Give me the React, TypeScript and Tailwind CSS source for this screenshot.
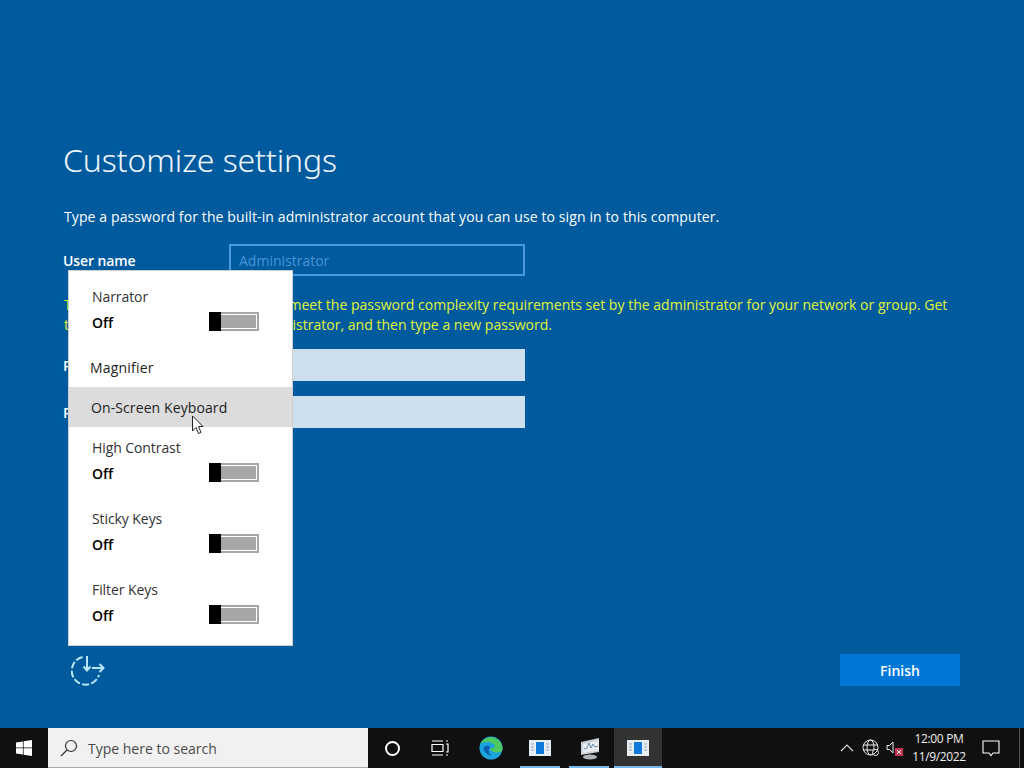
import React from "react";

function Toggle() {
  return (
    <div className="mb-[2px] flex h-[19px] w-[50px] border-2 border-[#a6a6a6] bg-[#a6a6a6]">
      <div className="-my-[2px] -ml-[2px] h-[19px] w-[12px] shrink-0 bg-black" />
      <div className="flex-1 border-[1px] border-white border-l-0 bg-[#a6a6a6]" />
    </div>
  );
}

function ToggleItem({ label }: { label: string }) {
  return (
    <div className="h-[71px] pl-[23px] pr-[33px]">
      <div className="h-[20px] text-[14px] leading-[20px] tracking-[-0.08px] text-[#333]">{label}</div>
      <div className="mt-[5px] flex h-[20px] items-center justify-between">
        <span className="text-[14px] font-semibold text-black">Off</span>
        <Toggle />
      </div>
    </div>
  );
}

function Win() {
  return (
    <svg width="16" height="16" viewBox="0 0 16 16" fill="#fff">
      <path d="M0 2.400 6.900 1.400V7.500H0ZM7.600 1.300 16 0V7.500H7.600ZM0 8.300H6.900V14.500L0 13.500ZM7.600 8.300H16V16L7.600 14.700Z" />
    </svg>
  );
}

function Doc() {
  return (
    <svg width="22" height="16" viewBox="0 0 22 16">
      <rect width="22" height="16" fill="#e8edf2" />
      <rect x="7" y="2" width="8" height="12" fill="#0f78dc" />
      <path d="M2 4h3M2 7h3M2 10h3M17 4h3M17 7h3M17 10h3" stroke="#8fa3b5" strokeWidth="1" />
    </svg>
  );
}

export default function App() {
  return (
    <div className="relative flex h-[768px] w-[1024px] flex-col overflow-hidden bg-[#005a9e] font-['Open_Sans','Noto_Sans',sans-serif] text-white">
      <main className="flex flex-1 flex-col pl-[64px] pt-[138px]">
        <h1 className="-ml-[1px] font-['Noto_Sans',sans-serif] text-[32px] font-light leading-[44px] tracking-[-0.1px] text-[#f0f6fb]">Customize settings</h1>
        <p className="mt-[25px] h-[20px] whitespace-nowrap text-[14px] leading-[20px] tracking-[0.11px]">
          Type a password for the built-in administrator account that you can use to sign in to this computer.
        </p>
        <div className="mt-[17px] flex h-[32px] items-center">
          <span className="-ml-[1px] w-[166px] text-[14px] font-semibold tracking-[-0.1px]">User name</span>
          <div className="flex h-[32px] w-[296px] items-center border-2 border-[#4a98e0] pl-[8px] text-[14px] text-[#4a94d8]">Administrator</div>
        </div>
        <div className="mt-[19px] whitespace-nowrap text-[14px] leading-[20px] tracking-[0.02px] text-[#e2f53a]">
          <div>The password you typed does not meet the password complexity requirements set by the administrator for your network or group. Get</div>
          <div>the requirements from your administrator, and then type a new password.</div>
        </div>
        <div className="mt-[14px] flex h-[32px] items-center">
          <span className="-ml-[1px] w-[166px] text-[14px] font-semibold">Password</span>
          <div className="h-[32px] w-[296px] bg-[#cddfee]" />
        </div>
        <div className="mt-[15px] flex h-[32px] items-center">
          <span className="-ml-[1px] w-[166px] text-[14px] font-semibold">Reenter password</span>
          <div className="h-[32px] w-[296px] bg-[#cddfee]" />
        </div>
        <div className="mt-[226px] flex h-[32px] items-center justify-between pr-[64px]">
          <svg width="36" height="32" viewBox="0 0 36 32" fill="none" stroke="#b8e6f2" strokeWidth="2" className="ml-[7px]">
            <path d="M11.500 3A14 14 0 1 0 28 21" strokeDasharray="7 2.200" />
            <path d="M16 2v14M12.500 12.500l3.500 4 3.500-4M21 14h11.500M28.500 10l4 4-4 4" />
          </svg>
          <button className="h-[32px] w-[120px] bg-[#0078d7] text-[14px] font-semibold text-white">Finish</button>
        </div>
      </main>

      <footer className="flex h-[40px] shrink-0 items-center bg-[#101010]">
        <div className="flex h-[40px] w-[48px] items-center justify-center"><Win /></div>
        <div className="flex h-[40px] w-[320px] items-center border-b border-[#aaa] bg-[#f1f1f1] pl-[12px] pt-[1px] text-[14px] text-[#4a4a4a]">
          <svg width="18" height="18" viewBox="0 0 18 18" fill="none" stroke="#333" strokeWidth="1.200"><circle cx="11" cy="7" r="5.500" /><path d="M7 11l-6 6" /></svg>
          <span className="ml-[10px]">Type here to search</span>
        </div>
        <div className="flex w-[48px] justify-center"><div className="h-[15px] w-[15px] rounded-full border-2 border-white" /></div>
        <div className="flex w-[48px] justify-center">
          <svg width="18" height="16" viewBox="0 0 18 16" fill="none" stroke="#fff" strokeWidth="1.200"><path d="M1 1h11M1 15h11M1 4.500h11v7H1zM15 1h2M15 4h2v8h-2M15 15h2" /></svg>
        </div>
        <div className="flex w-[52px] justify-center pl-[2px]">
          <svg width="24" height="24" viewBox="0 0 26 26">
            <circle cx="13" cy="13" r="12.500" fill="#1aa3dc" />
            <path d="M25.500 14a12.500 12.500 0 0 0-24-5c4-4 12-4 15.500 1 1 3-3 4-5 3 0 3 4 5 8 5 3 0 5.500-2 5.500-4z" fill="#4dc95e" />
            <path d="M12 13c-2 1-3 5 2 8-5 0-9-4-9-8 1-3 6-4 7 0z" fill="#0c5fae" />
          </svg>
        </div>
        <div className="relative flex h-[40px] w-[48px] items-center justify-center"><Doc /><div className="absolute bottom-0 left-[4px] h-[2px] w-[40px] bg-[#76b9ed]" /></div>
        <div className="relative flex h-[40px] w-[50px] items-center justify-center">
          <svg width="24" height="24" viewBox="0 0 24 24">
            <path d="M4 6 22 2v14L4 19z" fill="#c9d0d6" />
            <path d="M6 8 22 4v10L6 17z" fill="#e8ecef" />
            <path d="M7 13l3-1 2-5 2 5 2-4 2 3 3-1" stroke="#6b8cae" fill="none" />
            <ellipse cx="13" cy="21" rx="7" ry="2.500" fill="#aeb4b9" />
          </svg>
          <div className="absolute bottom-0 left-[5px] h-[2px] w-[40px] bg-[#76b9ed]" />
        </div>
        <div className="relative flex h-[40px] w-[48px] items-center justify-center bg-[#333]"><Doc /><div className="absolute bottom-0 left-0 h-[2px] w-[48px] bg-[#76b9ed]" /></div>
        <div className="flex flex-1 items-center justify-end">
          <svg width="14" height="8" viewBox="0 0 14 8" fill="none" stroke="#ddd" strokeWidth="1.100" className="mr-[8px]"><path d="M1 7l6-6 6 6" /></svg>
          <svg width="18" height="18" viewBox="0 0 18 18" fill="none" stroke="#eee" strokeWidth="1" className="mr-[6px]"><circle cx="8.500" cy="8.500" r="7.500" /><ellipse cx="8.500" cy="8.500" rx="3.500" ry="7.500" /><path d="M1 6h15M1 11h15" /><circle cx="13.500" cy="13.500" r="3" fill="#101010" /><path d="M11.500 15.500l4-4" /></svg>
          <svg width="18" height="18" viewBox="0 0 18 18" className="mr-[4px]"><path d="M1 6.500h2.500L7 3v11L3.500 10.500H1z" fill="none" stroke="#eee" /><rect x="9" y="9" width="8" height="8" fill="#c9304e" /><path d="M11 11l4 4M15 11l-4 4" stroke="#fff" /></svg>
          <div className="mr-[1px] w-[62px] text-center text-[12px] leading-[18px] tracking-[-0.35px] text-[#eee]">
            <div>12:00 PM</div>
            <div>11/9/2022</div>
          </div>
          <div className="flex h-[40px] w-[40px] items-center justify-center">
            <svg width="18" height="17" viewBox="0 0 18 17" fill="none" stroke="#fff" strokeWidth="1.100"><path d="M1 1h16v12h-6l-2 2.500-2-2.500H1z" /></svg>
          </div>
          <div className="ml-[8px] mr-[4px] h-[40px] w-[1px] bg-[#555]" />
        </div>
      </footer>

      <div className="absolute left-[68px] top-[270px] h-[376px] w-[225px] border border-[#cfcfcf] bg-white pt-[16px]">
        <ToggleItem label="Narrator" />
        <div className="h-[29px] pl-[21px] text-[14px] leading-[20px] tracking-[0.2px] text-[#222]">Magnifier</div>
        <div className="mb-[11px] flex h-[40px] items-center bg-[#dcdcdc] pl-[22px] text-[14px] tracking-[0.1px] text-[#222]">On-Screen Keyboard</div>
        <ToggleItem label="High Contrast" />
        <ToggleItem label="Sticky Keys" />
        <ToggleItem label="Filter Keys" />
      </div>

      <svg width="14" height="20" viewBox="0 0 14 20" className="absolute left-[191px] top-[415px]">
        <path d="M1.500 1v15l3.500-3.500 2.500 6 2.500-1-2.500-6h4.500z" fill="#fff" stroke="#222" strokeWidth="1" />
      </svg>
    </div>
  );
}
